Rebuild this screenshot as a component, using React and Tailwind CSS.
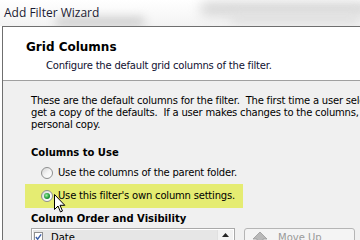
import React from "react";

function Radio({ checked }) {
  return (
    <span className="relative inline-block w-[12px] h-[12px] rounded-full border border-[#8e8f8f] bg-gradient-to-br from-[#d4d4d4] via-[#f4f4f4] to-white shrink-0">
      {checked && (
        <span className="absolute left-[2px] top-[2px] w-[6px] h-[6px] rounded-full bg-[radial-gradient(circle_at_40%_40%,#a6f0a8,#1f9d3a_55%,#0d5a1f)]" />
      )}
    </span>
  );
}

function Cursor() {
  return (
    <svg width="12" height="19" viewBox="0 0 12 19" className="absolute left-[54px] top-[194px]">
      <path
        d="M0.5 0.5 L0.5 15.5 L4 12 L6.5 18 L8.5 17 L6 11.3 L10.8 11.3 Z"
        fill="#fff"
        stroke="#000"
        strokeWidth="1"
        strokeLinejoin="round"
      />
    </svg>
  );
}

export default function App() {
  return (
    <div
      className="relative w-[360px] h-[240px] overflow-hidden bg-white"
      style={{ fontFamily: "'DejaVu Sans', Tahoma, sans-serif" }}
    >
      {/* title bar */}
      <div className="relative h-[26px] bg-gradient-to-b from-white to-[#f3f3f3] overflow-hidden">
        <div className="absolute left-[55px] top-[17px] w-[90px] h-[10px] rounded-full bg-[#cfcfcf] blur-[5px]" />
        <div className="absolute left-[200px] top-[2px] w-[170px] h-[14px] rounded-full bg-[#d6d6d6] blur-[6px]" />
        <div className="absolute left-[230px] top-[14px] w-[130px] h-[10px] rounded-full bg-[#e0e0e0] blur-[5px]" />
        <span
          className="relative block pl-[4px] pt-[5px] text-[12px] leading-[16px] text-[#1b1b33]"
          style={{ fontFamily: "'Open Sans', 'Noto Sans', sans-serif" }}
        >
          Add Filter Wizard
        </span>
      </div>

      {/* wizard frame */}
      <div className="ml-[2px] border-l border-t border-[#6f6f6f] h-[214px]">
        <div className="h-[54px] bg-white border-b border-[#a0a0a0] pl-[23px] pt-[13px]">
          <div className="text-[12px] leading-[14px] font-bold text-black">Grid Columns</div>
          <div className="mt-[6px] pl-[20px] text-[10px] leading-[12px] tracking-[-0.2px] text-[#101030]">
            Configure the default grid columns of the filter.
          </div>
        </div>

        <div className="relative h-[160px] bg-[#f0f0f0] pl-[28px] pt-[14px] text-[10px] leading-[12px] text-black">
          <p className="whitespace-nowrap tracking-[-0.2px]">
            These are the default columns for the filter.&nbsp; The first time a user selects the filter, they
            <br />
            get a copy of the defaults.&nbsp; If a user makes changes to the columns, they
            <br />
            personal copy.
          </p>

          <div className="mt-[16px] font-bold">Columns to Use</div>

          <div className="mt-[7px] ml-[10px] flex items-center gap-[5px] h-[14px] tracking-[-0.2px]">
            <Radio />
            <span>Use the columns of the parent folder.</span>
          </div>

          <div className="mt-[4px] -ml-[6px] w-[218px] h-[24px] bg-[#e5ec72] flex items-center pl-[16px] gap-[5px] tracking-[-0.2px]">
            <Radio checked />
            <span>Use this filter's own column settings.</span>
          </div>

          <div className="mt-[5px] font-bold">Column Order and Visibility</div>

          <div className="mt-[3px] flex items-start gap-[9px]">
            <div className="w-[204px] h-[30px] border border-[#a9a9a9] bg-white p-[1px] flex">
              <div className="flex-1 bg-[#e6e6e6] flex items-start pl-[1px] pt-[2px] gap-[8px]">
                <span className="w-[9px] h-[9px] border border-[#8f8f8f] bg-white flex items-center justify-center">
                  <svg width="8" height="8" viewBox="0 0 8 8">
                    <path d="M1 4 L3 6.5 L7 1" fill="none" stroke="#3c5fa8" strokeWidth="1.6" />
                  </svg>
                </span>
                <span className="leading-[12px]">Date</span>
              </div>
              <div className="w-[16px] bg-[#f2f2f2] border-l border-[#e0e0e0] flex justify-center pt-[3px]">
                <svg width="7" height="4" viewBox="0 0 7 4">
                  <path d="M3.5 0 L7 4 L0 4 Z" fill="#222" />
                </svg>
              </div>
            </div>
            <div className="w-[111px] h-[24px] border border-[#b5b5b5] rounded-[3px] bg-[#f4f4f4] flex items-start pt-[3px] pl-[8px] gap-[11px] text-[#9a9a9a]">
              <svg width="14" height="12" viewBox="0 0 14 12">
                <path d="M7 0 L14 7 L10 7 L10 12 L4 12 L4 7 L0 7 Z" fill="#b9b9b9" stroke="#9a9a9a" strokeWidth="0.8" />
              </svg>
              <span>Move Up</span>
            </div>
          </div>
        </div>
      </div>

      <Cursor />
    </div>
  );
}
